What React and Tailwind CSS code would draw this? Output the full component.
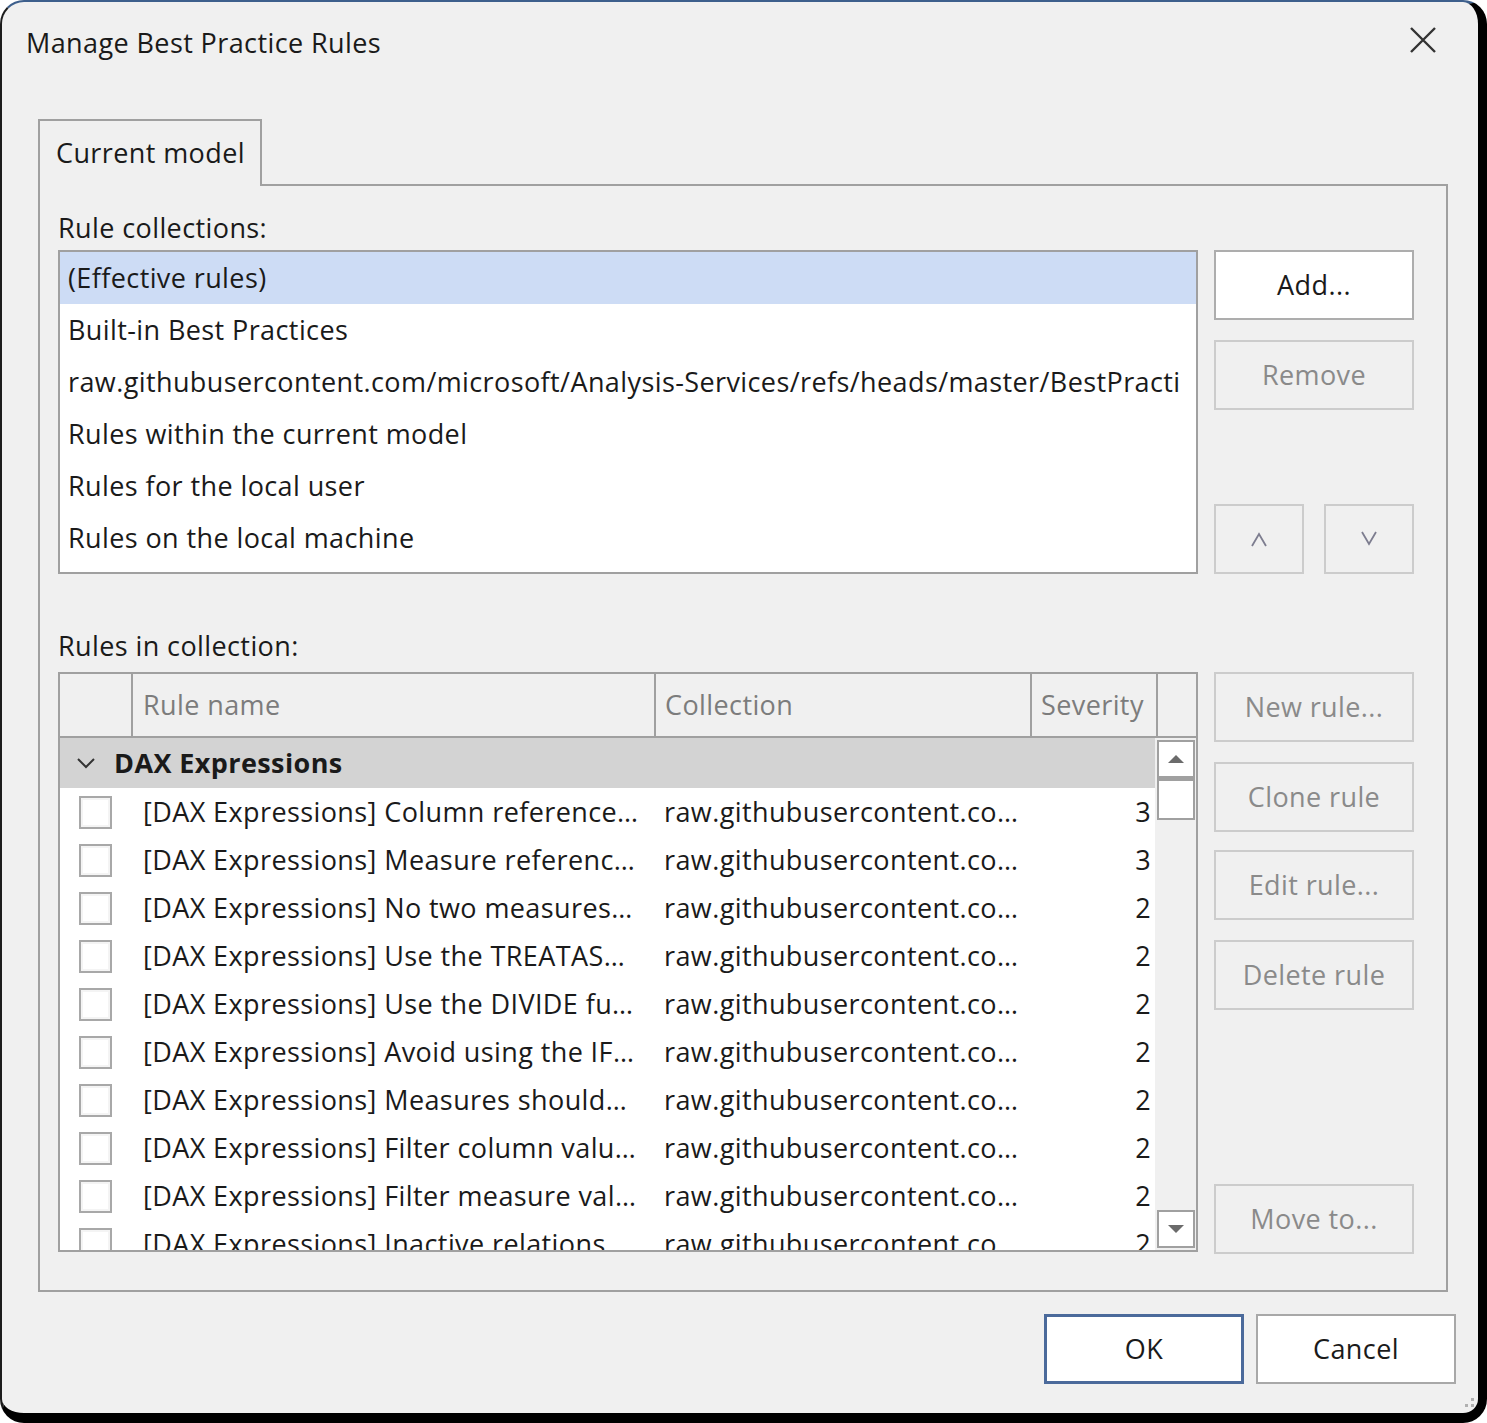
import React from 'react';

const FONT = { fontFamily: '"Open Sans", "Noto Sans", "Liberation Sans", sans-serif' };

const collections = [
  '(Effective rules)',
  'Built-in Best Practices',
  'raw.githubusercontent.com/microsoft/Analysis-Services/refs/heads/master/BestPracti',
  'Rules within the current model',
  'Rules for the local user',
  'Rules on the local machine',
];

const rules = [
  ['[DAX Expressions] Column reference…', '3'],
  ['[DAX Expressions] Measure referenc…', '3'],
  ['[DAX Expressions] No two measures…', '2'],
  ['[DAX Expressions] Use the TREATAS…', '2'],
  ['[DAX Expressions] Use the DIVIDE fu…', '2'],
  ['[DAX Expressions] Avoid using the IF…', '2'],
  ['[DAX Expressions] Measures should…', '2'],
  ['[DAX Expressions] Filter column valu…', '2'],
  ['[DAX Expressions] Filter measure val…', '2'],
  ['[DAX Expressions] Inactive relations…', '2'],
];

const SideButton = ({ children, enabled, className = '' }) => (
  <div
    className={
      'flex h-[70px] w-[200px] items-center justify-center border-2 ' +
      (enabled ? 'border-[#adadad] bg-white text-[#1a1a1a] ' : 'border-[#cccccc] bg-[#f0f0f0] text-[#8a8a8a] ') +
      className
    }
  >
    {children}
  </div>
);

const Checkbox = () => (
  <div className="h-[33px] w-[33px] border-2 border-[#a8a8a8] bg-white shadow-[inset_0_0_0_2px_#f4f4f4]" />
);

export default function App() {
  return (
    <div className="h-[1423px] w-[1487px] bg-white text-[27px] tracking-[0.4px] text-[#1a1a1a]" style={FONT}>
      <div className="relative flex h-full w-full flex-col rounded-[24px] border-b-[10px] border-l-2 border-r-[9px] border-t-2 border-b-black border-l-[#1c1c1c] border-r-black border-t-[#3d5f8c] bg-[#f0f0f0]">
        {/* title bar */}
        <div className="flex h-[80px] shrink-0 items-center justify-between pl-[24px] pr-[41px]">
          <span className="leading-none">Manage Best Practice Rules</span>
          <svg width="28" height="28" viewBox="0 0 28 28" className="-mt-[4px]">
            <path d="M2 2 L26 26 M26 2 L2 26" stroke="#333" strokeWidth="2.4" />
          </svg>
        </div>

        {/* tab */}
        <div className="ml-[36px] mt-[37px] flex flex-col">
          <div className="relative z-10 -mb-[2px] flex h-[67px] w-[224px] items-center border-2 border-b-0 border-[#a0a0a0] bg-[#f0f0f0] pl-[16px]">
            Current model
          </div>
          <div className="flex h-[1108px] w-[1410px] flex-col border-2 border-[#a0a0a0] pl-[18px] pt-[22px]">
            <div className="flex h-[40px] items-center">Rule collections:</div>
            <div className="mt-[2px] flex gap-[16px]">
              <div className="h-[324px] w-[1140px] overflow-hidden border-2 border-[#a0a0a0] bg-white">
                {collections.map((c, i) => (
                  <div
                    key={i}
                    className={'flex h-[52px] items-center pl-[8px] ' + (i === 0 ? 'bg-[#cddcf5]' : '')}
                  >
                    <div className="w-[1122px] overflow-hidden whitespace-nowrap">{c}</div>
                  </div>
                ))}
              </div>
              <div className="flex h-[324px] flex-col">
                <SideButton enabled>Add...</SideButton>
                <SideButton className="mt-[20px]">Remove</SideButton>
                <div className="mt-auto flex gap-[20px]">
                  <div className="flex h-[70px] w-[90px] items-center justify-center border-2 border-[#cccccc]">
                    <svg width="18" height="16" viewBox="0 0 18 16">
                      <path d="M2 15 L9 3 L16 15" fill="none" stroke="#7d7d8f" strokeWidth="1.8" />
                    </svg>
                  </div>
                  <div className="flex h-[70px] w-[90px] items-center justify-center border-2 border-[#cccccc]">
                    <svg width="18" height="16" viewBox="0 0 18 16">
                      <path d="M2 1 L9 13 L16 1" fill="none" stroke="#7d7d8f" strokeWidth="1.8" />
                    </svg>
                  </div>
                </div>
              </div>
            </div>

            <div className="mt-[52px] flex h-[40px] items-center">Rules in collection:</div>
            <div className="mt-[6px] flex gap-[16px]">
              {/* grid */}
              <div className="flex h-[580px] w-[1140px] flex-col overflow-hidden border-2 border-[#a0a0a0] bg-white">
                <div className="flex h-[64px] shrink-0 border-b-2 border-[#a0a0a0] bg-[#f0f0f0] text-[#7c7c7c]">
                  <div className="w-[73px] border-r-2 border-[#a0a0a0]" />
                  <div className="flex w-[523px] items-center border-r-2 border-[#a0a0a0] pl-[10px]">Rule name</div>
                  <div className="flex w-[376px] items-center border-r-2 border-[#a0a0a0] pl-[9px]">Collection</div>
                  <div className="flex w-[126px] items-center border-r-2 border-[#a0a0a0] pl-[9px]">Severity</div>
                  <div className="flex-1" />
                </div>
                <div className="flex min-h-0 flex-1">
                  <div className="w-[1095px] overflow-hidden">
                    <div className="flex h-[50px] items-center bg-[#d3d3d3] font-bold">
                      <svg width="20" height="12" viewBox="0 0 20 12" className="ml-[16px] mr-[18px]">
                        <path d="M2 2 L10 10 L18 2" fill="none" stroke="#333" strokeWidth="2" />
                      </svg>
                      DAX Expressions
                    </div>
                    {rules.map(([name, sev], i) => (
                      <div key={i} className="flex h-[48px] items-center whitespace-nowrap">
                        <div className="flex w-[73px] justify-start pl-[19px]">
                          <Checkbox />
                        </div>
                        <div className="w-[523px] overflow-hidden pl-[10px]">{name}</div>
                        <div className="w-[376px] overflow-hidden pl-[8px]">raw.githubusercontent.co…</div>
                        <div className="flex-1 pr-[4px] text-right">{sev}</div>
                      </div>
                    ))}
                  </div>
                  {/* scrollbar */}
                  <div className="flex w-[41px] flex-col bg-[#f0f0f0] py-[2px] pl-[2px] pr-[1px]">
                    <div className="flex h-[38px] items-center justify-center border-2 border-[#a0a0a0] bg-white">
                      <svg width="18" height="10" viewBox="0 0 18 10">
                        <path d="M1 9 L9 1 L17 9 Z" fill="#6b6b6b" />
                      </svg>
                    </div>
                    <div className="h-[42px] border-2 border-t-[3px] border-[#a0a0a0] bg-white" />
                    <div className="mt-auto flex h-[38px] items-center justify-center border-2 border-[#a0a0a0] bg-white">
                      <svg width="18" height="10" viewBox="0 0 18 10">
                        <path d="M1 1 L9 9 L17 1 Z" fill="#6b6b6b" />
                      </svg>
                    </div>
                  </div>
                </div>
              </div>
              <div className="flex h-[582px] flex-col">
                <SideButton>New rule...</SideButton>
                <SideButton className="mt-[20px]">Clone rule</SideButton>
                <SideButton className="mt-[18px]">Edit rule...</SideButton>
                <SideButton className="mt-[20px]">Delete rule</SideButton>
                <SideButton className="mt-auto">Move to...</SideButton>
              </div>
            </div>
          </div>
        </div>

        {/* bottom buttons */}
        <div className="mt-[22px] flex justify-end gap-[12px] pr-[22px]">
          <div className="flex h-[70px] w-[200px] items-center justify-center border-[3px] border-[#4b6a9b] bg-white">OK</div>
          <div className="flex h-[70px] w-[200px] items-center justify-center border-2 border-[#a8a8a8] bg-white">Cancel</div>
        </div>

        {/* resize grip */}
        <div className="absolute bottom-[6px] right-[4px] h-[3px] w-[3px] bg-[#b0b0b0]" />
        <div className="absolute bottom-[12px] right-[4px] h-[3px] w-[3px] bg-[#b0b0b0]" />
        <div className="absolute bottom-[6px] right-[10px] h-[3px] w-[3px] bg-[#b0b0b0]" />
      </div>
    </div>
  );
}
